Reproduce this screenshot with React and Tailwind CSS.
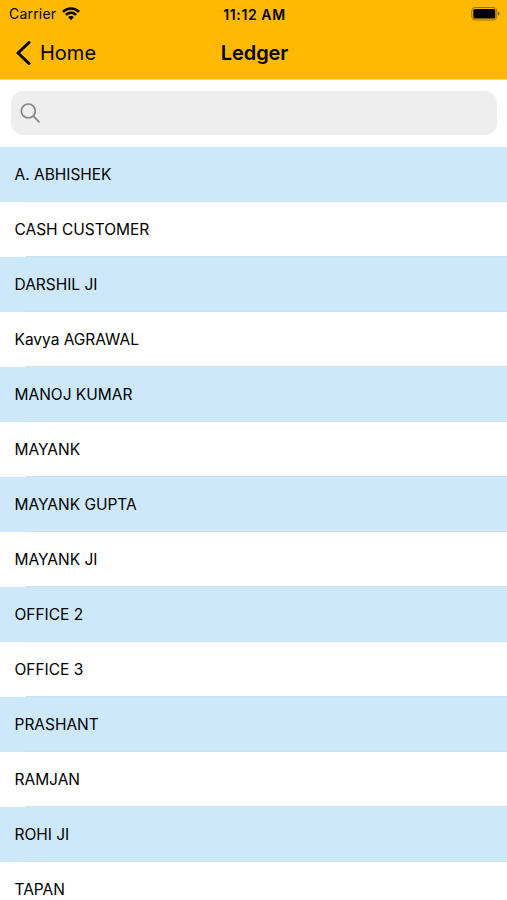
const ledgers = [
  "A. ABHISHEK",
  "CASH CUSTOMER",
  "DARSHIL JI",
  "Kavya AGRAWAL",
  "MANOJ KUMAR",
  "MAYANK",
  "MAYANK GUPTA",
  "MAYANK JI",
  "OFFICE 2",
  "OFFICE 3",
  "PRASHANT",
  "RAMJAN",
  "ROHI JI",
  "TAPAN",
]

function StatusBar() {
  return (
    <div className="grid grid-cols-3 items-center h-[27px] pl-[9px] pr-[7px] text-[14px]">
      <div className="flex items-center gap-[6px]">
        <span className="tracking-[0.2px]">Carrier</span>
        <svg className="w-[18px] h-[14px]" viewBox="0 0 18 14" fill="none" stroke="currentColor" strokeWidth="2.5">
          <path d="M1 4.8C5.5 0.3 12.5 0.3 17 4.8" />
          <path d="M3.9 7.9C6.8 5.1 11.2 5.1 14.1 7.9" />
          <path d="M9 13.2L6 10.1C7.7 8.6 10.3 8.6 12 10.1Z" fill="currentColor" stroke="none" />
        </svg>
      </div>
      <span className="pt-px text-center font-semibold tracking-[0.6px]">11:12 AM</span>
      <svg className="justify-self-end w-[29px] h-[14px]" viewBox="0 0 29 14">
        <rect x="0.75" y="0.5" width="25" height="12.5" rx="3.5" fill="none" stroke="#000" strokeOpacity="0.4" />
        <rect x="2.3" y="2" width="22" height="9.4" rx="1.5" />
        <path d="M27 4.5C29 5.1 29 8.3 27 8.9Z" fillOpacity="0.45" />
      </svg>
    </div>
  )
}

function NavBar() {
  return (
    <div className="grid grid-cols-3 items-center h-[51px] px-[16px]">
      <button className="flex items-center gap-[9px] text-[20px]">
        <svg className="w-[15px] h-[24px]" viewBox="0 0 15 24" fill="none" stroke="currentColor" strokeWidth="3" strokeLinecap="round" strokeLinejoin="round">
          <path d="M13 1.5L2 12L13 22.5" />
        </svg>
        Home
      </button>
      <h1 className="pl-[2px] text-center text-[20px] font-semibold tracking-[-0.1px]">Ledger</h1>
    </div>
  )
}

export default function App() {
  return (
    <div className="h-[900px] overflow-hidden bg-white text-black font-['Inter',sans-serif]">
      <header className="h-[80px] border-b border-[#eed9a5] bg-[#ffb900]">
        <StatusBar />
        <NavBar />
      </header>

      <div className="h-[67px] pl-[11px] pr-[10px] pt-[11px]">
        <div className="flex items-center h-[44px] rounded-[12px] bg-[#eeeeee] pl-[9px]">
          <svg className="w-[21px] h-[21px]" viewBox="0 0 21 21" fill="none" stroke="#858585" strokeWidth="1.7" strokeLinecap="round">
            <circle cx="8.3" cy="8" r="7" />
            <path d="M13.4 13.1L19 18.8" />
          </svg>
        </div>
      </div>

      <ul>
        {ledgers.map((name) => (
          <li key={name} className="h-[55px] odd:bg-[#cce8fa]">
            <div className="flex items-center h-[54px] pl-[14.5px] pt-[2px] text-[15.5px] tracking-[-0.02px]">{name}</div>
            {/* inset separator */}
            <div className="ml-[26px] h-px bg-[#c9e1f0]" />
          </li>
        ))}
      </ul>
    </div>
  )
}
